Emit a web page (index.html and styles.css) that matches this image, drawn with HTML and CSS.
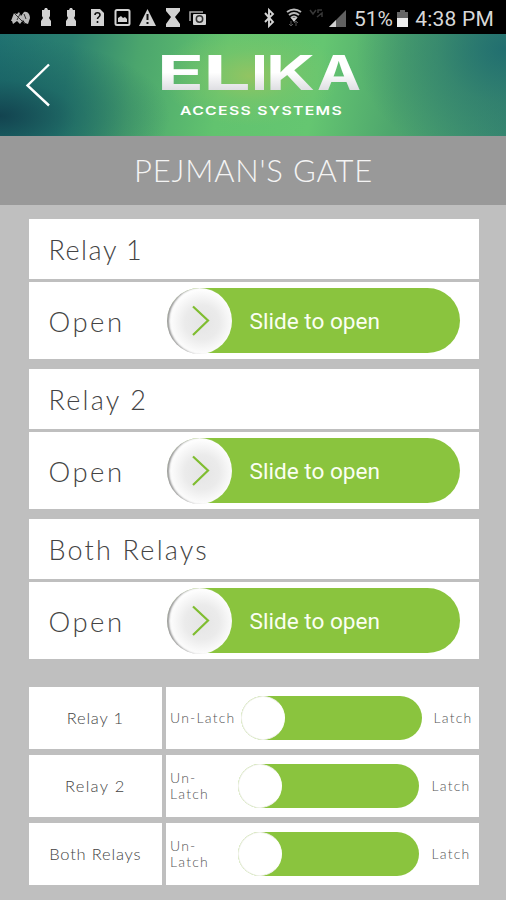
FILE: index.html
```html
<!DOCTYPE html>
<html lang="en">
<head>
<meta charset="utf-8">
<title>Elika Access Systems</title>
<link rel="stylesheet" href="styles.css">
</head>
<body>
<div class="status">
  <svg class="status-icons" width="506" height="34" viewBox="0 0 506 34" fill="#d2d2d2">
    <path d="M11 21l3-8 3 1 2-2 2 4 3-4c4-1 6 3 6 6l-2 6-3-1-2-3-3 4-3-3-4 3-1-3z" fill="#bbb"/>
    <path d="M14 13l11 11M17 20l3-6M24 14l2 5" stroke="#333" stroke-width="1" fill="none"/>
    <path d="M42 10h2l1-2h2l1 2h2v6l-1 2 2 3v5H41v-5l2-3-1-2z"/>
    <path d="M67 10h2l1-2h2l1 2h2v6l-1 2 2 3v5H66v-5l2-3-1-2z"/>
    <path d="M91 9h9l4 4v13H91z"/>
    <path d="M95 15c0-3 5-3 5 0 0 2-2.500 2-2.500 4M97.500 21v2" stroke="#111" stroke-width="1.600" fill="none"/>
    <rect x="115.500" y="10" width="14" height="15" rx="1.500" fill="none" stroke="#d2d2d2" stroke-width="2"/>
    <path d="M118 22v-4l3-2 2 2 2-1 2 2v3z"/>
    <path d="M147.500 9l8.500 17h-17z"/>
    <path d="M147.500 14v6M147.500 22v2" stroke="#111" stroke-width="2"/>
    <path d="M166 8h14v3l-5 6 5 7v3h-14v-3l5-7-5-6z"/>
    <path d="M190 21v-9h13" fill="none" stroke="#aaa" stroke-width="1.500"/>
    <rect x="193" y="14" width="13" height="11" rx="1"/>
    <circle cx="199.500" cy="19" r="3.200" fill="none" stroke="#333" stroke-width="1.500"/>
    <path d="M265 13l8 9-4 4V10l4 4-8 8" fill="none" stroke="#d2d2d2" stroke-width="1.900"/>
    <path d="M287 12q7-5 14 0M289 15q5-4 10 0M291 18q3-3 6 0" fill="none" stroke="#bbb" stroke-width="2"/>
    <path d="M291 18h6l-3 4z"/>
    <path d="M291 21v5m-2-2l2 2 2-2M296 26v-5m-2 2l2-2 2 2" fill="none" stroke="#555" stroke-width="1"/>
    <path d="M310 10l3 4 3-4M322 10h-4v3M317 17l5-4v4" fill="none" stroke="#383838" stroke-width="1.500"/>
    <path d="M346 10v17h-17z" fill="#606060"/>
    <path d="M336 20v7h-7z"/>
    <path d="M400 10h5v2h3v15h-11V12h3z" fill="#666"/>
    <path d="M397 18h11v9h-11z" fill="#eee"/>
  </svg>
  <span class="battery">51%</span>
  <span class="clock">4:38 PM</span>
</div>
<header class="brand">
  <svg class="back" width="26" height="44" viewBox="0 0 26 44" fill="none" stroke="#fff" stroke-width="2.400"><path d="M24 1.500L2.500 22.500 24 42.500"/></svg>
  <svg class="logo" width="220" height="75" viewBox="0 0 220 75">
    <defs><linearGradient id="silver" x1="0" y1="0" x2="0" y2="1"><stop offset=".5" stop-color="#fff"/><stop offset=".8" stop-color="#dedee2"/></linearGradient></defs>
    <text class="logo-name" y="45" fill="url(#silver)"><tspan x="1" textLength="47" lengthAdjust="spacingAndGlyphs">E</tspan><tspan x="47" textLength="48" lengthAdjust="spacingAndGlyphs">L</tspan><tspan x="95" textLength="17" lengthAdjust="spacingAndGlyphs">I</tspan><tspan x="110" textLength="49" lengthAdjust="spacingAndGlyphs">K</tspan><tspan x="161" textLength="44" lengthAdjust="spacingAndGlyphs">A</tspan></text>
    <text class="logo-sub" x="24" y="70" textLength="163" lengthAdjust="spacingAndGlyphs" fill="#fff">ACCESS SYSTEMS</text>
  </svg>
</header>
<h1 class="title">PEJMAN'S GATE</h1>
<main>
  <section class="card">
    <h2 class="name">Relay 1</h2>
    <div class="action"><span class="open">Open</span><div class="slider"><span class="knob"><svg width="20" height="32" viewBox="0 0 20 32"><path d="M2 1.500L17 15.500 2 30"/></svg></span><span class="hint">Slide to open</span></div></div>
  </section>
  <section class="card">
    <h2 class="name two">Relay 2</h2>
    <div class="action"><span class="open">Open</span><div class="slider"><span class="knob"><svg width="20" height="32" viewBox="0 0 20 32"><path d="M2 1.500L17 15.500 2 30"/></svg></span><span class="hint">Slide to open</span></div></div>
  </section>
  <section class="card">
    <h2 class="name two">Both Relays</h2>
    <div class="action"><span class="open">Open</span><div class="slider"><span class="knob"><svg width="20" height="32" viewBox="0 0 20 32"><path d="M2 1.500L17 15.500 2 30"/></svg></span><span class="hint">Slide to open</span></div></div>
  </section>
  <div class="latches">
    <div class="latch-name">Relay 1</div>
    <div class="latch wide"><span class="off">Un-Latch</span><span class="toggle"><i></i></span><span class="on">Latch</span></div>
    <div class="latch-name two">Relay 2</div>
    <div class="latch"><span class="off">Un-<br>Latch</span><span class="toggle"><i></i></span><span class="on">Latch</span></div>
    <div class="latch-name">Both Relays</div>
    <div class="latch"><span class="off">Un-<br>Latch</span><span class="toggle"><i></i></span><span class="on">Latch</span></div>
  </div>
</main>
</body>
</html>
```
FILE: styles.css
```css
* { box-sizing: border-box; }
body {
  margin: 0;
  width: 506px;
  height: 900px;
  overflow: hidden;
  background: #bfbfbf;
  font-family: Lato, "Open Sans", sans-serif;
  font-weight: 300;
  color: #444;
}
.status {
  position: relative;
  display: flex;
  height: 34px;
  padding: 3px 12px 0 354px;
  justify-content: space-between;
  align-items: center;
  background: #000;
  color: #d8d8d8;
  font: 400 21px Roboto, sans-serif;
  white-space: nowrap;
}
.clock { letter-spacing: .2px; }
.status-icons { position: absolute; left: 0; top: 0; }
.brand {
  display: flex;
  height: 102px;
  padding-left: 25px;
  background:
    radial-gradient(ellipse 170px 80px at 0 82px, rgba(17, 62, 76, .9), rgba(20, 88, 94, .5) 45%, rgba(32, 114, 113, 0)),
    radial-gradient(ellipse 150px 120px at 506px 15px, rgba(30, 107, 112, .9), rgba(36, 112, 110, .45) 45%, rgba(59, 139, 112, 0)),
    radial-gradient(ellipse 90px 50px at 250px 42px, #92c462, rgba(128, 198, 104, .5) 50%, rgba(101, 198, 113, 0)),
    linear-gradient(100deg, #207271 0, #2b8070 14%, #4ba56d 27%, #62c36f 44%, #65c671 62%, #4ea66d 78%, #3b8b70 100%);
}
.back { margin-top: 29px; flex: none; }
.logo { margin-left: 105px; margin-top: 11px; flex: none; }
.logo-name { font: 700 48px Inter, sans-serif; }
.logo-sub { font: 600 12px Inter, sans-serif; letter-spacing: 1px; }
.title {
  margin: 0;
  height: 69px;
  padding-left: 1px;
  background: #999;
  color: #f4f4f4;
  font-size: 31px;
  font-weight: 300;
  line-height: 69px;
  letter-spacing: .8px;
  text-align: center;
}
main { padding: 14px 27.500px 0 28.500px; }
.card { margin-bottom: 10px; }
.name {
  height: 60px;
  margin: 0 0 3px;
  padding-left: 20px;
  background: #fff;
  font-size: 27px;
  font-weight: 300;
  line-height: 61px;
  letter-spacing: 1.500px;
}
.name.two { letter-spacing: 2.200px; }
.action {
  display: flex;
  height: 77px;
  padding-left: 20px;
  align-items: center;
  background: #fff;
}
.open { width: 118px; padding-top: 1px; font-size: 27.500px; letter-spacing: 2.500px; }
.slider {
  display: flex;
  width: 293px;
  height: 65px;
  border-radius: 33px;
  align-items: center;
  background: #8ac43e;
}
.knob {
  display: flex;
  width: 65px;
  height: 66px;
  padding-left: 3px;
  align-items: center;
  justify-content: center;
  border-radius: 50%;
  background: radial-gradient(circle at 54% 52%, #e5e5e5, #ebebeb 35%, #fff 68%);
  box-shadow: inset 3px 0 2px -1px #999, -1px 0 1px #fff;
}
.knob path { fill: none; stroke: #7fbd30; stroke-width: 2.200; }
.hint { margin: 2px 0 0 18px; color: #fafff2; font: 400 22.600px Roboto, sans-serif; }
.latches {
  display: grid;
  grid-template-columns: 133.500px 312.500px;
  grid-auto-rows: 61.500px;
  gap: 6.700px 4px;
  margin-top: 28px;
}
.latch-name, .latch { display: flex; align-items: center; background: #fff; }
.latch-name { justify-content: center; font-size: 16.500px; letter-spacing: .8px; }
.latch-name.two { letter-spacing: 1.300px; }
.latch { padding-left: 4px; font-size: 14px; line-height: 16px; letter-spacing: 1.200px; color: #555; }
.off { width: 68px; white-space: nowrap; }
.wide .off { width: 71px; }
.toggle { flex: none; width: 181px; height: 44px; margin-right: 12.500px; border-radius: 22px; background: #8ac43e; }
.wide .toggle { margin-right: 11.500px; }
.toggle i { display: block; width: 44px; height: 44px; border: 1px solid #f2f2ee; border-right-color: #fff; border-radius: 50%; background: #fff; }
```
